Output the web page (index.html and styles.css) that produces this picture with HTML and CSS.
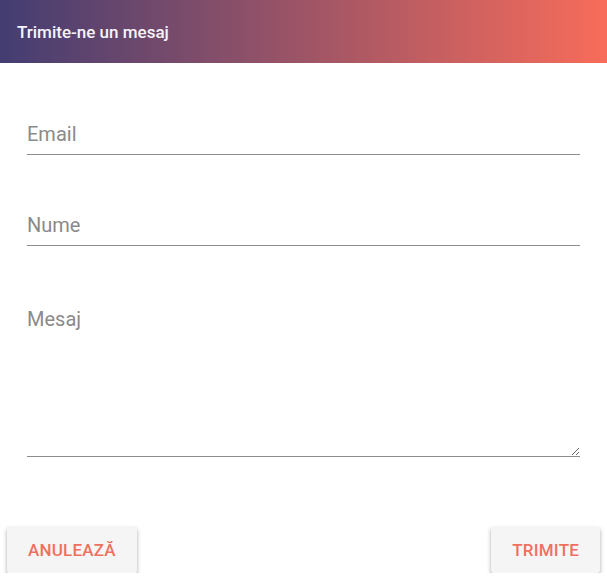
FILE: index.html
```html
<!DOCTYPE html>
<html lang="ro">
<head>
<meta charset="utf-8">
<title>Trimite-ne un mesaj</title>
<link rel="stylesheet" href="styles.css">
</head>
<body>
<div class="dialog">
  <header class="dialog-header">
    <h1 class="dialog-title">Trimite-ne un mesaj</h1>
  </header>
  <form class="dialog-form">
    <input class="field" type="email" placeholder="Email">
    <input class="field" type="text" placeholder="Nume">
    <textarea class="field field-area" placeholder="Mesaj"></textarea>
  </form>
  <div class="dialog-actions">
    <button class="btn" type="button">ANULEAZĂ</button>
    <button class="btn" type="button">TRIMITE</button>
  </div>
</div>
</body>
</html>
```
FILE: styles.css
```css
* { box-sizing: border-box; }
html, body { margin: 0; padding: 0; background: #fff; }
body { font-family: Roboto, "Noto Sans", sans-serif; }
.dialog { width: 607px; }
.dialog-header {
  height: 63px;
  background: linear-gradient(to right, #433d72, #f86c5a);
  display: flex;
  align-items: center;
  padding: 0 17px;
}
.dialog-title {
  margin: 0;
  font-size: 17px;
  font-weight: 500;
  color: #f6f4fa;
}
.dialog-form {
  display: flex;
  flex-direction: column;
  padding: 51px 27px 0;
  gap: 50px;
}
.field {
  display: block;
  width: 100%;
  height: 41px;
  border: none;
  border-bottom: 1px solid #8c8c8c;
  padding: 0;
  margin: 0;
  font-family: Roboto, sans-serif;
  font-size: 20px;
  color: #333;
  background: transparent;
  outline: none;
  border-radius: 0;
}
.field::placeholder { color: #8a8a8a; opacity: 1; }
.field-area {
  height: 161px;
  padding-top: 11px;
  resize: vertical;
}
.dialog-actions {
  display: flex;
  justify-content: space-between;
  padding: 70px 7px 0;
}
.btn {
  height: 46px;
  padding: 0 21px;
  border: none;
  border-radius: 2px;
  background: #f5f5f5;
  color: #f0705f;
  font-family: Roboto, sans-serif;
  font-size: 17px;
  font-weight: 500;
  letter-spacing: 0.2px;
  box-shadow: 0 2px 4px rgba(0,0,0,0.32), 0 1px 1px rgba(0,0,0,0.12);
  cursor: pointer;
}
```
